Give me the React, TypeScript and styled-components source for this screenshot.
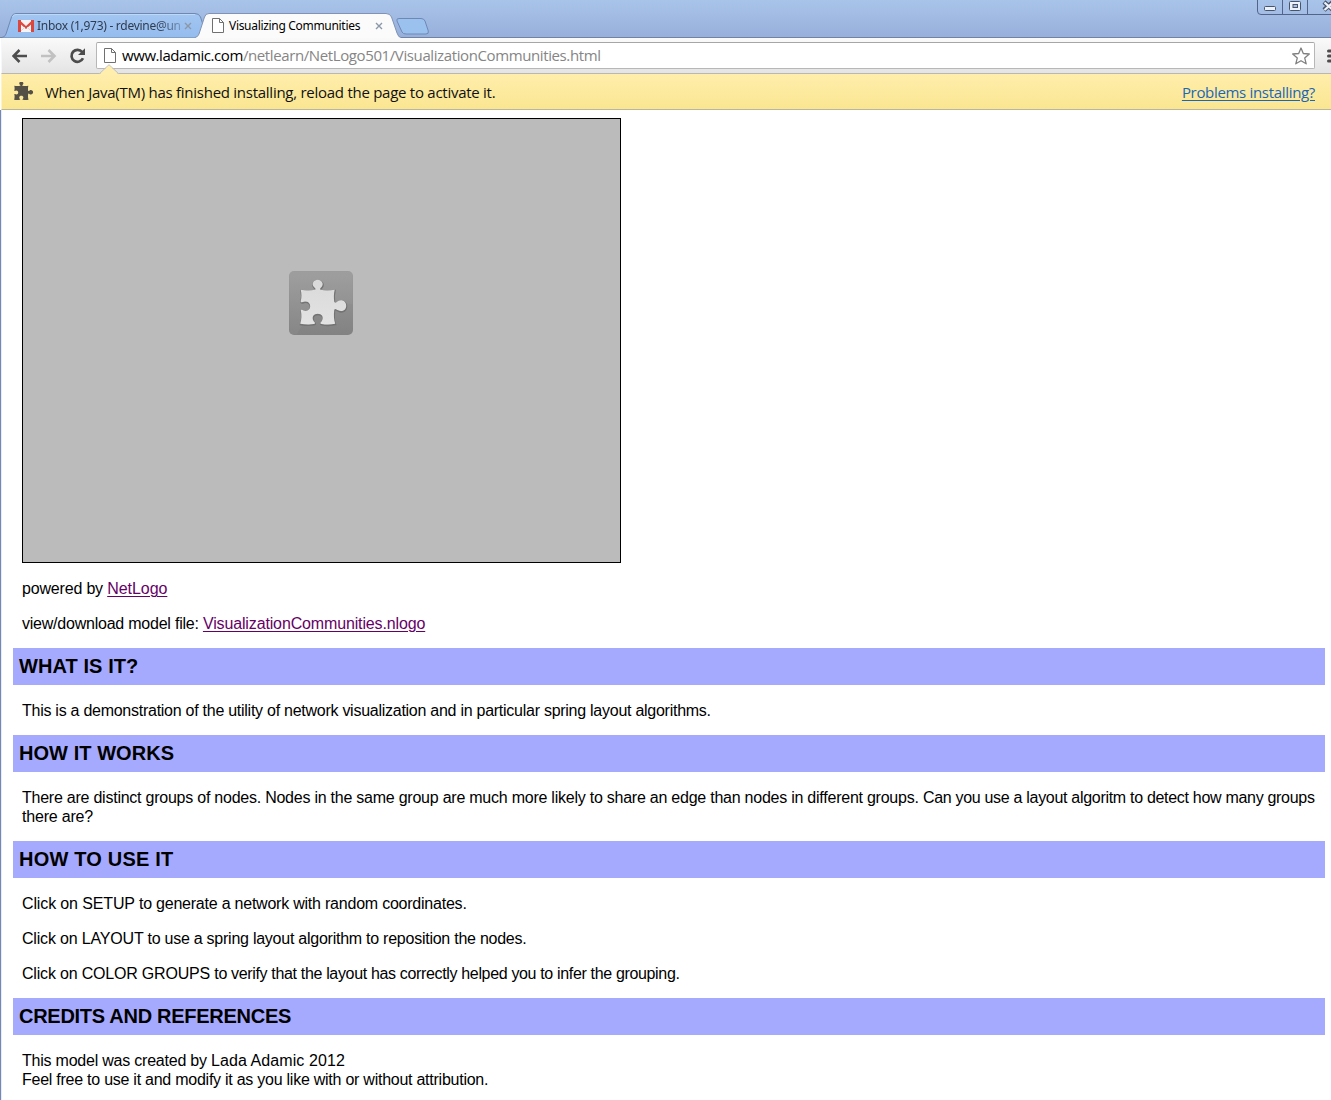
import React from 'react';
import styled, { createGlobalStyle } from 'styled-components';

const Global = createGlobalStyle`
  html, body { margin: 0; padding: 0; }
  body { background: #fff; overflow: hidden; }
  * { box-sizing: border-box; }
`;

const Window = styled.div`
  width: 1331px;
  height: 1100px;
  display: flex;
  flex-direction: column;
  overflow: hidden;
  background: #fff;
`;

const TitleBar = styled.header`
  position: relative;
  flex: none;
  height: 38px;
  display: flex;
  align-items: flex-end;
  background: linear-gradient(#a9c4e9, #98b0dc 36px);
  border-bottom: 1px solid #73839f;
`;

const TabItem = styled.div<{ $width: number; $active?: boolean; $overlap?: number }>`
  position: relative;
  z-index: ${(p) => (p.$active ? 2 : 1)};
  width: ${(p) => p.$width}px;
  height: 25px;
  margin-left: ${(p) => p.$overlap ?? 0}px;
  margin-bottom: -1px;
  display: flex;
  align-items: center;
`;

const TabShape = styled.svg`
  position: absolute;
  inset: 0;
  z-index: -1;
`;

const TabIcon = styled.svg`
  flex: none;
`;

const TabLabel = styled.span<{ $width: number; $spacing: number; $fade?: boolean; $gap: number }>`
  width: ${(p) => p.$width}px;
  margin-left: ${(p) => p.$gap}px;
  white-space: nowrap;
  font: 12px/18px "Noto Sans", "Open Sans", sans-serif;
  letter-spacing: ${(p) => p.$spacing}px;
  color: ${(p) => (p.$fade ? '#303b4e' : '#000')};
  ${(p) => p.$fade && 'mask-image: linear-gradient(to right, #000 120px, rgba(0,0,0,.25) 146px);'}
`;

const NewTab = styled.svg`
  margin: 0 0 2px -6px;
  z-index: 1;
`;

const WindowControls = styled.svg`
  position: absolute;
  right: 0;
  top: 0;
`;

const Toolbar = styled.nav`
  flex: none;
  height: 35px;
  margin-left: 1px;
  padding-left: 10px;
  display: flex;
  align-items: center;
  background: linear-gradient(#fafafa, #e4e4e4);
  border-left: 1px solid #f5f7fb;
`;

const NavIcons = styled.svg`
  flex: none;
`;

const AddressBar = styled.div`
  width: 1219px;
  height: 27px;
  margin-left: 10px;
  display: flex;
  align-items: center;
  padding: 0 4px 0 7px;
  background: #fff;
  border: 1px solid #b7b7b7;
  border-top-color: #a6a6a6;
  border-radius: 2px;
`;

const Url = styled.span`
  flex: 1;
  margin-left: 6px;
  white-space: nowrap;
  font: 15px/23px "Open Sans", "Noto Sans", sans-serif;
  letter-spacing: -0.39px;
  color: #858585;
`;

const Host = styled.span`
  color: #000;
  letter-spacing: -0.43px;
`;

const MenuIcon = styled.svg`
  flex: none;
  margin-left: 12px;
`;

const InfoBar = styled.div`
  position: relative;
  flex: none;
  height: 37px;
  margin-left: 1px;
  padding: 0 16px 0 12px;
  display: flex;
  align-items: center;
  background: linear-gradient(#ffeeac, #fae691);
  border-top: 1px solid #b9b7af;
  border-bottom: 1px solid #bab59f;
  border-left: 1px solid #fff3c4;
  font: 15px/24px "Open Sans", "Noto Sans", sans-serif;
`;

const Pointer = styled.svg`
  position: absolute;
  left: 96px;
  top: -10px;
`;

const InfoText = styled.span`
  flex: 1;
  margin-left: 11px;
  white-space: nowrap;
  letter-spacing: -0.265px;
  color: #111;
`;

const InfoLink = styled.a`
  color: #1a66b8;
  letter-spacing: -0.32px;
  text-decoration: underline;
  text-underline-offset: 2px;
`;

const Page = styled.main`
  flex: 1;
  padding: 8px 6px 0 11px;
  border-left: 1px solid #7388b6;
  box-shadow: inset 1px 0 #e8ebf2;
  font: 16px/19px "Liberation Sans", Arial, sans-serif;
  color: #000;
`;

const Applet = styled.div`
  width: 599px;
  height: 445px;
  margin: 0 0 16px 10px;
  display: flex;
  justify-content: center;
  padding: 152px 1px 0 0;
  background: #bbb;
  border: 1px solid #000;
`;

const Heading = styled.h2`
  height: 37px;
  margin: 0 0 16px 1px;
  padding: 0 6px;
  background: #a6aaff;
  font-size: 20px;
  line-height: 36px;
  white-space: nowrap;
`;

const Para = styled.p<{ $last?: boolean }>`
  margin: 0 0 ${(p) => (p.$last ? 15 : 16)}px 10px;
  white-space: nowrap;
`;

const Run = styled.span<{ $ls: number }>`
  letter-spacing: ${(p) => p.$ls}px;
`;

const Link = styled.a<{ $ls: number }>`
  color: #660066;
  letter-spacing: ${(p) => p.$ls}px;
  text-decoration: underline;
  text-underline-offset: 2px;
  text-decoration-thickness: 1px;
`;

const Spacer = styled.span<{ $w: number }>`
  flex: none;
  width: ${(p) => p.$w}px;
`;

const PUZZLE =
  'M12 19 C17 20 22 20 26 19 C28 18.5 26.5 17.5 25 16 C22.5 13 25 9 29 9 C33 9 35.5 13 33 16 C31.5 17.5 30.5 18.5 32 19 C36 20 41 20 46 19 C45 23 45 27 45.5 30.5 C46 33 47.5 31.5 49 30.5 C53 28 57.5 30.5 57.5 35 C57.5 39.5 53 41.5 49.5 39.5 C47.5 38.5 46 37 45.5 39.5 C45 44 45 49 46.5 53 C42 54 37 54 33 53.2 C31 53 31.5 52 33 50.5 C35.5 46 33 43 29 43 C25 43 22.5 46 25 50.5 C26.5 52 27 53 25 53.2 C20 54 16 53.5 11.5 53 C13 49 13 44 12.2 40 C12 38.5 13.5 39 15 39.7 C18.5 41 21.5 39 21.5 35.5 C21.5 32 18.5 30 15 31 C13.5 31.5 12 32 12 30.5 C13 27 13 23 12 19Z';

function PageGlyph() {
  return (
    <TabIcon width="12" height="15" viewBox="0 0 12 15">
      <path d="M.5.5h7l4 4v10H.5z" fill="#fff" stroke="#707070" />
      <path d="M7.5.5v4h4" fill="none" stroke="#707070" />
    </TabIcon>
  );
}

function CloseGlyph() {
  return (
    <TabIcon width="8" height="8" viewBox="0 0 8 8">
      <path d="M1 1l6 6M7 1L1 7" stroke="#8c97a8" strokeWidth="1.4" />
    </TabIcon>
  );
}

export default function App() {
  return (
    <Window>
      <Global />
      <TitleBar>
        <TabItem $width={206} $overlap={1}>
          <TabShape width="206" height="25">
            <defs>
              <linearGradient id="tabBlue" x1="0" y1="0" x2="0" y2="1">
                <stop offset="0" stopColor="#a3c6f2" />
                <stop offset="1" stopColor="#94bcee" />
              </linearGradient>
            </defs>
            <path d="M1 24.5 Q4 24 5 21 L10.500 4 Q11.500 .5 15 .5 H194 Q198 .5 199.500 4 L206 24.500" fill="url(#tabBlue)" stroke="#7088b0" />
            <path d="M11.500 4 Q12 1.500 15 1.500 H194" fill="none" stroke="#bdd7f7" />
          </TabShape>
          <Spacer $w={17} />
          <TabIcon width="16" height="12" viewBox="0 0 16 12">
            <rect width="16" height="12" rx="1" fill="#f5f5f5" />
            <path d="M0 0H3V12H0zM13 0h3v12h-3z" fill="#d94840" />
            <path d="M1 1.200L8 7.500l7-6.300" fill="none" stroke="#dc4a41" strokeWidth="2.300" />
            <path d="M3 11l4-4M13 11L9 7" stroke="#d9d9d9" />
          </TabIcon>
          <TabLabel $width={144} $spacing={-0.28} $gap={3} $fade>Inbox (1,973) - rdevine@un</TabLabel>
          <Spacer $w={3} />
          <CloseGlyph />
        </TabItem>
        <TabItem $width={207} $overlap={-12} $active>
          <TabShape width="207" height="25">
            <path d="M0 25 Q3 23 4 21 L9.500 4 Q10.500 .5 14 .5 H191 Q195 .5 196.500 4 L202 20 Q203.500 24.500 206 24.500 V25Z" fill="#fbfbfb" />
            <path d="M0 24.500 Q3 24 4 21 L9.500 4 Q10.500 .5 14 .5 H191 Q195 .5 196.500 4 L202 20 Q203.500 24.500 206 24.500" fill="none" stroke="#8193b4" />
          </TabShape>
          <Spacer $w={17} />
          <PageGlyph />
          <TabLabel $width={140} $spacing={-0.31} $gap={5}>Visualizing Communities</TabLabel>
          <Spacer $w={6} />
          <CloseGlyph />
        </TabItem>
        <NewTab width="33" height="17" viewBox="0 0 33 17">
          <path d="M3 .5H25Q28 .5 29 3L32.300 13Q33 16 30 16H10Q7 16 6 14L1 3Q0 .5 3 .5Z" fill="#9bc1ef" stroke="#6f88b3" />
        </NewTab>
        <WindowControls width="74" height="15" viewBox="0 0 74 15">
          <path d="M.5 0V11Q.5 14.500 4 14.500H74M25.500 0V14M50.500 0V14" fill="none" stroke="#536488" />
          <rect x="7.500" y="6.500" width="11" height="4" rx="1" fill="#edf2f9" stroke="#46546c" />
          <rect x="32.500" y="1.500" width="11" height="9" rx="1" fill="#edf2f9" stroke="#46546c" />
          <rect x="36" y="4.500" width="4.500" height="3" fill="#a9bfe3" stroke="#46546c" />
          <path d="M67 2L76 10M76 2L67 10" stroke="#46546c" strokeWidth="4.500" />
          <path d="M67.500 2.500L76 10M76 2.500L67.500 10" stroke="#edf2f9" strokeWidth="2.300" />
        </WindowControls>
      </TitleBar>
      <Toolbar>
        <NavIcons width="74" height="18" viewBox="12 47 74 18">
          <path d="M27 56H14M19.500 50L13.500 56L19.500 62" fill="none" stroke="#4d4d4d" strokeWidth="2.600" />
          <path d="M41 56H54M48.500 50L54.500 56L48.500 62" fill="none" stroke="#c1c1c1" strokeWidth="2.600" />
          <path d="M82.200 52A6 6 0 1 0 83 58.300" fill="none" stroke="#4d4d4d" strokeWidth="2.700" />
          <path d="M85 48.200V55H78z" fill="#4d4d4d" />
        </NavIcons>
        <AddressBar>
          <PageGlyph />
          <Url><Host>www.ladamic.com</Host>/netlearn/NetLogo501/VisualizationCommunities.html</Url>
          <TabIcon width="18" height="18" viewBox="0 0 18 18">
            <path d="M9 1L11.300 6.500L17.300 7L12.700 10.900L14.200 16.800L9 13.700L3.800 16.800L5.300 10.900L.7 7L6.700 6.500Z" fill="#fff" stroke="#808080" strokeWidth="1.300" strokeLinejoin="round" />
          </TabIcon>
        </AddressBar>
        <MenuIcon width="4" height="14" viewBox="0 0 4 14">
          <path d="M1.500 2H6M1.500 7H6M1.500 12H6" stroke="#4d4d4d" strokeWidth="3" strokeLinecap="round" />
        </MenuIcon>
      </Toolbar>
      <InfoBar>
        <Pointer width="22" height="11" viewBox="0 0 22 11">
          <path d="M1 11L11 1L21 11Z" fill="#ffeeac" />
          <path d="M1 10L11 .7L21 10" fill="none" stroke="#c6c2b5" />
        </Pointer>
        <TabIcon width="20" height="19" viewBox="12 10 47 46"><path d={PUZZLE} fill="#555046" /></TabIcon>
        <InfoText>When Java(TM) has finished installing, reload the page to activate it.</InfoText>
        <InfoLink>Problems installing?</InfoLink>
      </InfoBar>
      <Page>
        <Applet>
          <TabIcon width="64" height="64" viewBox="0 0 64 64">
            <defs>
              <linearGradient id="badge" x1="0" y1="0" x2="0" y2="1">
                <stop offset="0" stopColor="#9b9b9b" />
                <stop offset="1" stopColor="#828282" />
              </linearGradient>
              <linearGradient id="piece" x1="0" y1="0" x2="0" y2="1">
                <stop offset="0" stopColor="#d9d9d9" />
                <stop offset="1" stopColor="#e3e3e3" />
              </linearGradient>
            </defs>
            <rect width="64" height="64" rx="5" fill="url(#badge)" />
            <path d="M5 .5H59Q63.500 .5 63.500 5V33Q40 30 22 45Q12 54 8 63.500H5Q.5 63.500 .5 59V5Q.5 .5 5 .5Z" fill="#fff" fillOpacity=".04" />
            <path d={PUZZLE} fill="none" stroke="#737373" strokeWidth="1.500" transform="translate(0 .6)" />
            <path d={PUZZLE} fill="url(#piece)" transform="translate(-.3 -.2)" />
          </TabIcon>
        </Applet>
        <Para><Run $ls={-0.18}>powered by </Run><Link $ls={-0.05}>NetLogo</Link></Para>
        <Para $last><Run $ls={-0.225}>view/download model file: </Run><Link $ls={-0.14}>VisualizationCommunities.nlogo</Link></Para>
        <Heading><Run $ls={0.08}>WHAT IS IT?</Run></Heading>
        <Para $last><Run $ls={-0.262}>This is a demonstration of the utility of network visualization and in particular spring layout algorithms.</Run></Para>
        <Heading><Run $ls={0.06}>HOW IT WORKS</Run></Heading>
        <Para $last>
          <Run $ls={-0.238}>There are distinct groups of nodes. Nodes in the same group are much more likely to share an edge than nodes in different groups. </Run>
          <Run $ls={-0.3}>Can you use a layout algoritm to detect how many groups</Run><br />
          <Run $ls={-0.2}>there are?</Run>
        </Para>
        <Heading><Run $ls={0.2}>HOW TO USE IT</Run></Heading>
        <Para><Run $ls={-0.13}>Click on SETUP </Run><Run $ls={-0.223}>to generate a network with random coordinates.</Run></Para>
        <Para><Run $ls={-0.18}>Click on LAYOUT </Run><Run $ls={-0.248}>to use a spring layout algorithm to reposition the nodes.</Run></Para>
        <Para $last><Run $ls={-0.19}>Click on COLOR GROUPS </Run><Run $ls={-0.34}>to verify that the layout has correctly helped you to infer the grouping.</Run></Para>
        <Heading><Run $ls={-0.28}>CREDITS AND REFERENCES</Run></Heading>
        <Para>
          <Run $ls={-0.22}>This model was created by </Run><Run $ls={0.08}>Lada Adamic 2012</Run><br />
          <Run $ls={-0.25}>Feel free to use it and modify it as you like with or without attribution.</Run>
        </Para>
      </Page>
    </Window>
  );
}
